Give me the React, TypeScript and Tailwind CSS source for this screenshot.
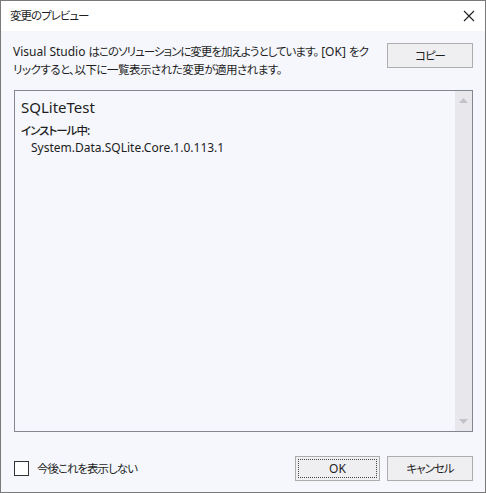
function J({ children }: { children: React.ReactNode }) {
  return <span className="text-[11.5px] tracking-[-1px]">{children}</span>;
}

export default function App() {
  const font = { fontFamily: '"Noto Sans", "Noto Sans CJK JP", sans-serif' };
  return (
    <div
      className="w-[486px] h-[493px] flex flex-col border border-[#7a7a7a] bg-[#f5f7fc] text-[#1e1e1e] overflow-hidden [font-feature-settings:'palt']"
      style={font}
    >
      {/* title bar */}
      <div className="h-[30px] shrink-0 bg-white flex items-center justify-between pl-[9px] pr-[8px]">
        <span className="text-[12px] leading-none">
          <J>変更のプレビュー</J>
        </span>
        <svg width="14" height="14" viewBox="0 0 14 14" className="mr-[1px]">
          <path d="M2 2 L12 12 M12 2 L2 12" stroke="#1e1e1e" strokeWidth="1.1" />
        </svg>
      </div>

      {/* body */}
      <div className="flex-1 flex flex-col px-[12px] pt-[11px] pb-[11px]">
        <div className="flex justify-between gap-[10px]">
          <p className="text-[12px] leading-[18px] pt-[1px] whitespace-nowrap min-w-0">
            Visual Studio <J>はこのソリューションに変更を加えようとしています。</J> [OK] <J>をク</J>
            <br />
            <span className="text-[11.5px] tracking-[-0.5px]">
              リックすると、以下に一覧表示された変更が適用されます。
            </span>
          </p>
          <button className="w-[86px] h-[25px] mt-[1px] shrink-0 bg-[#efeff2] border border-[#adadad] text-[12px] leading-none">
            <J>コピー</J>
          </button>
        </div>

        {/* changes list */}
        <div className="mt-[11px] ml-[1px] h-[342px] border border-[#828790] flex">
          <div className="flex-1 pl-[6px] pt-[6px]">
            <div className="text-[15px] leading-[20px]">SQLiteTest</div>
            <div className="mt-[5px] text-[12px] leading-[17px] font-medium">
              <J>インストール中</J>:
            </div>
            <div className="pl-[10px] text-[12px] leading-[17px]">System.Data.SQLite.Core.1.0.113.1</div>
          </div>
          <div className="w-[17px] bg-[#e8e8ec] flex flex-col justify-between items-center py-[7px]">
            <svg width="9" height="5" viewBox="0 0 9 5">
              <path d="M0 5 L4.5 0 L9 5 Z" fill="#c2c3c9" />
            </svg>
            <svg width="9" height="5" viewBox="0 0 9 5">
              <path d="M0 0 L4.5 5 L9 0 Z" fill="#c2c3c9" />
            </svg>
          </div>
        </div>

        {/* footer */}
        <div className="mt-auto flex items-center">
          <div className="flex items-center ml-[1px]">
            <div className="w-[15px] h-[15px] border border-[#333] bg-white" />
            <span className="ml-[8px] text-[12px] leading-none">
              <J>今後これを表示しない</J>
            </span>
          </div>
          <div className="ml-auto flex gap-[7px]">
            <button className="w-[85px] h-[25px] bg-[#efeff2] border border-[#adadad] p-[2px]">
              <div className="w-full h-full border border-dotted border-[#444] flex items-center justify-center text-[12px] leading-none">
                OK
              </div>
            </button>
            <button className="w-[86px] h-[25px] bg-[#efeff2] border border-[#adadad] text-[12px] leading-none">
              <J>キャンセル</J>
            </button>
          </div>
        </div>
      </div>
    </div>
  );
}
